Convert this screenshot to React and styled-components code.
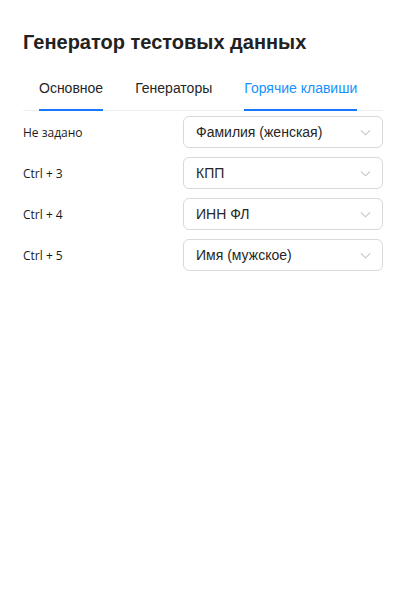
import React, { useState } from 'react';
import styled, { createGlobalStyle } from 'styled-components';

const GlobalStyle = createGlobalStyle`
  body {
    margin: 0;
    background: #fff;
    font-family: "Liberation Sans", Arial, sans-serif;
  }
`;

const tabs = ['Основное', 'Генераторы', 'Горячие клавиши'];

const hotkeys = [
    { key: 'Не задано', value: 'Фамилия (женская)' },
    { key: 'Ctrl + 3', value: 'КПП' },
    { key: 'Ctrl + 4', value: 'ИНН ФЛ' },
    { key: 'Ctrl + 5', value: 'Имя (мужское)' },
];

const Chevron = () => (
    <svg width="11" height="11" viewBox="0 0 12 12" fill="none">
        <path d="M1 3.8 L6 8.6 L11 3.8" stroke="#c4c4c4" strokeWidth="1.1" />
    </svg>
);

const App = () => {
    const [active, setActive] = useState(2);

    return (
        <>
            <GlobalStyle />
            <Page>
                <Title>Генератор тестовых данных</Title>
                <TabBar>
                    {tabs.map((t, i) => (
                        <Tab
                            key={t}
                            $active={i === active}
                            $marked={i === active || i === 0}
                            onClick={() => setActive(i)}
                        >
                            {t}
                        </Tab>
                    ))}
                </TabBar>
                <List>
                    {hotkeys.map(h => (
                        <Row key={h.key}>
                            <Label>{h.key}</Label>
                            <Select>
                                <span>{h.value}</span>
                                <Chevron />
                            </Select>
                        </Row>
                    ))}
                </List>
            </Page>
        </>
    );
};

const Page = styled.div`
  padding: 30px 22px 0 23px;
`;

const Title = styled.h1`
  margin: 0;
  font-size: 20px;
  line-height: 24px;
  font-weight: 700;
  color: #222;
`;

const TabBar = styled.div`
  display: flex;
  margin-top: 13px;
  border-bottom: 1px solid #f0f0f0;
`;

const Tab = styled.div`
  position: relative;
  padding: 10px 16px 11px;
  font-size: 14px;
  line-height: 22px;
  color: ${p => (p.$active ? '#1890ff' : '#262626')};
  cursor: pointer;

  &::after {
    content: '';
    display: ${p => (p.$marked ? 'block' : 'none')};
    position: absolute;
    left: 16px;
    right: 16px;
    bottom: -1px;
    height: 2px;
    background: #1677ff;
  }
`;

const List = styled.div`
  display: flex;
  flex-direction: column;
  gap: 9px;
  margin-top: 5px;
`;

const Row = styled.div`
  display: flex;
  align-items: center;
  justify-content: space-between;
`;

const Label = styled.span`
  font-family: "Open Sans", "Noto Sans", sans-serif;
  font-size: 12px;
  color: #1a1a1a;
`;

const Select = styled.div`
  box-sizing: border-box;
  width: 200px;
  height: 32px;
  display: flex;
  align-items: center;
  justify-content: space-between;
  padding: 0 11px 0 12px;
  border: 1px solid #d9d9d9;
  border-radius: 6px;
  font-size: 14px;
  color: #262626;
`;

export default App;
